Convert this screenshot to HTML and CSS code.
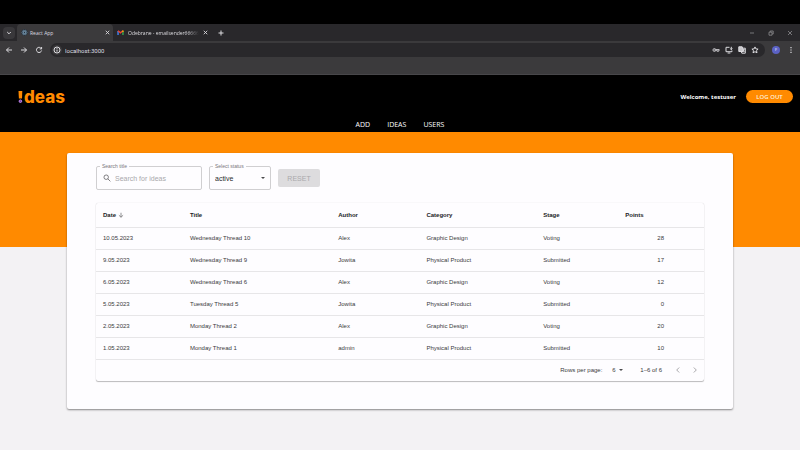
FILE: index.html
```html
<!DOCTYPE html>
<html lang="en">
<head>
<meta charset="utf-8">
<title>React App</title>
<link rel="stylesheet" href="styles.css">
</head>
<body>
<div class="browser">
  <div class="tabs">
    <button class="tab-menu" aria-label="Search tabs"><svg viewBox="0 0 8 8"><path d="M2.200 3l1.800 1.800L5.800 3"/></svg></button>
    <div class="tab tab-active">
      <svg class="react" viewBox="0 0 10 10"><circle cx="5" cy="5" r="4.500" fill="#26313c" stroke="none"/><g stroke="#7fa3bd" stroke-width=".7"><ellipse cx="5" cy="5" rx="3.800" ry="1.500"/><ellipse cx="5" cy="5" rx="3.800" ry="1.500" transform="rotate(60 5 5)"/><ellipse cx="5" cy="5" rx="3.800" ry="1.500" transform="rotate(120 5 5)"/></g></svg>
      <span class="tab-title">React App</span>
      <button aria-label="Close tab"><svg viewBox="0 0 8 8"><path d="M2 2l4 4M6 2L2 6"/></svg></button>
    </div>
    <div class="tab">
      <svg viewBox="0 0 10 8"><g stroke-width="2"><path stroke="#4285f4" d="M1.500 7.500V2"/><path stroke="#34a853" d="M8.500 7.500V3"/><path stroke="#ea4335" d="M1.500 1.500L5 4.500l3.500-3"/><path stroke="#fbbc04" d="M8.500 1.200v2"/></g></svg>
      <span class="tab-title tab-fade">Odebrane - emailsender66666</span>
      <button aria-label="Close tab"><svg viewBox="0 0 8 8"><path d="M2 2l4 4M6 2L2 6"/></svg></button>
    </div>
    <button class="new-tab" aria-label="New tab"><svg viewBox="0 0 8 8"><path d="M4 1.500v5M1.500 4h5"/></svg></button>
    <div class="window-controls">
      <button aria-label="Minimize"><svg viewBox="0 0 8 8"><path d="M2 4h4"/></svg></button>
      <button aria-label="Restore"><svg viewBox="0 0 8 8"><path d="M2 3.200h3v3H2zM3.200 3V2h3v3h-1"/></svg></button>
      <button aria-label="Close"><svg viewBox="0 0 8 8"><path d="M2 2l4 4M6 2L2 6"/></svg></button>
    </div>
  </div>
  <div class="toolbar">
    <button aria-label="Back"><svg viewBox="0 0 8 8"><path d="M7 4H1.500M4 1.500L1.500 4 4 6.500"/></svg></button>
    <button aria-label="Forward"><svg viewBox="0 0 8 8"><path d="M1 4h5.500M4 1.500L6.500 4 4 6.500"/></svg></button>
    <button aria-label="Reload"><svg viewBox="0 0 8 8"><path d="M6.300 2.600A2.600 2.600 0 1 0 6.600 4.500M6.600 1v1.900H4.700"/></svg></button>
    <div class="address">
      <span class="site-info"><svg viewBox="0 0 8 8"><circle cx="4" cy="4" r="3"/><path d="M4 3.600v2M4 2.100v.8"/></svg></span>
      <input class="url" aria-label="Address" value="localhost:3000">
      <button aria-label="Passwords"><svg viewBox="0 0 10 8"><circle cx="3" cy="4" r="1.800"/><path d="M4.800 3.400H9v1.400H8v1H6.800v-1h-2"/><circle cx="3" cy="4" r=".3"/></svg></button>
      <button aria-label="Install"><svg viewBox="0 0 8 8"><path d="M4.500 1.300H1v4.400h6V4.500M2.600 7h2.800M6.300.8v2.800M5.200 2.600l1.100 1.100 1.100-1.100"/></svg></button>
      <button aria-label="Translate"><svg viewBox="0 0 8 8"><path fill="#c8c7ca" d="M.8.8h3.400l1.200 4.700H.8z"/><path d="M4.500 2.200h2.800v5H3.800L3.300 5.800M4.800 3.800h2M5.800 3.200c0 1.500-.6 2-1.200 2.500M5 4.400l1.500 1.500"/></svg></button>
      <button aria-label="Bookmark"><svg viewBox="0 0 8 8"><path d="M4 .9l.9 2 2.200.2-1.600 1.500.5 2.200L4 5.700 2 6.800l.5-2.200L.9 3.100l2.200-.2z"/></svg></button>
    </div>
    <button class="avatar" aria-label="Profile">F</button>
    <button aria-label="Menu"><svg viewBox="0 0 8 8"><path stroke-width="1.200" d="M4 1v1.200M4 3.400v1.200M4 5.800V7"/></svg></button>
  </div>
</div>

<header class="header">
  <div class="header-top">
    <a class="logo" href="#" aria-label="Ideas"><svg viewBox="0 0 5 12"><path fill="#ff8a00" stroke="none" d="M.5 0h3.800L4 7.500H.9z"/><circle cx="2.400" cy="10.200" r="1.300" fill="#7a4aa8" stroke="#c58af0" stroke-width=".9"/></svg><span>deas</span></a>
    <div class="account"><span>Welcome, testuser</span><button class="logout">LOG OUT</button></div>
  </div>
  <nav class="nav"><a href="#">ADD</a><a href="#">IDEAS</a><a href="#">USERS</a></nav>
</header>

<main class="main">
  <section class="card">
    <form class="filters">
      <div class="field search">
        <label for="search">Search title</label>
        <svg viewBox="0 0 10 10"><circle cx="4" cy="4" r="2.800"/><path d="M6 6l3.200 3.200"/></svg>
        <input id="search" type="text" placeholder="Search for ideas">
      </div>
      <div class="field status">
        <label for="status">Select status</label>
        <select id="status"><option>active</option></select>
        <svg class="caret" viewBox="0 0 4 2"><path d="M0 0h4L2 2z"/></svg>
      </div>
      <button class="reset" type="reset" disabled>RESET</button>
    </form>
    <div class="panel">
      <table>
        <thead>
          <tr><th class="c-date">Date <svg viewBox="0 0 8 8"><path d="M4 1v6M1.200 4.300L4 7l2.800-2.700"/></svg></th><th class="c-title">Title</th><th class="c-author">Author</th><th class="c-category">Category</th><th class="c-stage">Stage</th><th>Points</th></tr>
        </thead>
        <tbody>
          <tr><td>10.05.2023</td><td>Wednesday Thread 10</td><td>Alex</td><td>Graphic Design</td><td>Voting</td><td class="points">28</td></tr>
          <tr><td>9.05.2023</td><td>Wednesday Thread 9</td><td>Jowita</td><td>Physical Product</td><td>Submitted</td><td class="points">17</td></tr>
          <tr><td>6.05.2023</td><td>Wednesday Thread 6</td><td>Alex</td><td>Graphic Design</td><td>Voting</td><td class="points">12</td></tr>
          <tr><td>5.05.2023</td><td>Tuesday Thread 5</td><td>Jowita</td><td>Physical Product</td><td>Submitted</td><td class="points">0</td></tr>
          <tr><td>2.05.2023</td><td>Monday Thread 2</td><td>Alex</td><td>Graphic Design</td><td>Voting</td><td class="points">20</td></tr>
          <tr><td>1.05.2023</td><td>Monday Thread 1</td><td>admin</td><td>Physical Product</td><td>Submitted</td><td class="points">10</td></tr>
        </tbody>
      </table>
      <div class="pagination">
        <label for="rows">Rows per page:</label>
        <div class="rows"><select id="rows"><option>6</option></select><svg class="caret" viewBox="0 0 4 2"><path d="M0 0h4L2 2z"/></svg></div>
        <span class="range">1–6 of 6</span>
        <button disabled aria-label="Previous page"><svg viewBox="0 0 8 8"><path d="M5.200 1.500L2.700 4l2.500 2.500"/></svg></button>
        <button disabled aria-label="Next page"><svg viewBox="0 0 8 8"><path d="M2.800 1.500L5.300 4 2.800 6.500"/></svg></button>
      </div>
    </div>
  </section>
</main>
</body>
</html>
```
FILE: styles.css
```css
* { box-sizing: border-box; }

body {
  margin: 0;
  min-height: 100vh;
  display: flex;
  flex-direction: column;
  background: #f3f2f4;
  font-family: "Liberation Sans", Arial, sans-serif;
  font-size: 6px;
  color: #3a3a3c;
}

button, input, select {
  margin: 0;
  padding: 0;
  border: 0;
  background: none;
  color: inherit;
  font: inherit;
  outline: 0;
}

select { appearance: none; }
a { color: inherit; text-decoration: none; }

svg {
  display: block;
  flex: none;
  width: 8px;
  height: 8px;
  fill: none;
  stroke: currentColor;
  overflow: visible;
}

/* Browser frame */
.browser {
  border-top: 24px solid #000;
  border-bottom: 1px solid #48474a;
  background: #3b3a3c;
  color: #dddce0;
  font-family: "Open Sans", sans-serif;
  font-size: 5px;
}

.tabs {
  display: flex;
  align-items: center;
  height: 17px;
  padding-left: 3px;
  background: #29282b;
}

.tab-menu {
  padding: 2px;
  border-radius: 4px;
  background: #39383b;
}

.tab {
  display: flex;
  align-items: center;
  gap: 2px;
  width: 98px;
  height: 17px;
  padding: 0 2px 0 4px;
}

.tab-active {
  width: 96px;
  margin-left: 2px;
  border-radius: 4px 4px 0 0;
  background: #3b3a3c;
}

.tab > svg { width: 7px; height: 7px; }
.tab button { margin-left: auto; }
.tab button svg { width: 7px; height: 7px; }
.tab-title { white-space: nowrap; }

.tab-fade {
  margin-left: 2px;
  mask-image: linear-gradient(90deg, #000 85%, transparent);
}

.new-tab { padding-left: 6px; }

.window-controls {
  display: flex;
  gap: 11px;
  margin-left: auto;
  padding-right: 6px;
  color: #99989b;
}

.window-controls svg { stroke-width: .7; }

.toolbar {
  display: flex;
  align-items: center;
  gap: 7px;
  padding: 2px 5px 17px;
}

.address {
  flex: 1;
  display: flex;
  align-items: center;
  gap: 5px;
  height: 14px;
  padding: 0 6px 0 2px;
  border-radius: 7px;
  background: #29282b;
}

.site-info {
  padding: 1px;
  border-radius: 50%;
  background: #3b3a3c;
}

.url {
  flex: 1;
  min-width: 0;
  margin-left: -2px;
  font-family: Roboto, sans-serif;
  font-size: 6px;
}

.avatar {
  width: 8px;
  height: 8px;
  border-radius: 50%;
  background: #5b62c4;
  color: #fff;
  font-size: 4px;
  line-height: 8px;
}

/* Site header */
.header {
  background: #000;
  color: #fff;
  font-family: "Open Sans", sans-serif;
}

.header-top {
  display: flex;
  align-items: center;
  justify-content: space-between;
  height: 43px;
  padding: 0 7px 0 18px;
}

.logo {
  display: flex;
  align-items: center;
  gap: 1px;
  color: #ff8a00;
  font-family: Inter, sans-serif;
  font-size: 17px;
  font-weight: 800;
  line-height: 20px;
}

.logo svg { width: 5px; height: 12px; }

.account {
  display: flex;
  align-items: center;
  gap: 10px;
  font-weight: 700;
}

.logout {
  width: 47px;
  height: 13px;
  border-radius: 7px;
  background: #ff8a00;
  color: #fff0dc;
  font-weight: 600;
}

.nav {
  display: flex;
  justify-content: center;
  gap: 17px;
  height: 14px;
  font-size: 7px;
  line-height: 14px;
}

/* Ideas list */
.main {
  flex: 1;
  padding: 21px 67px 41px;
  background: linear-gradient(#ff8a00 115px, transparent 115px);
}

.card {
  padding: 13px 29px 28px;
  border-radius: 2px;
  background: #fefdff;
  box-shadow: 0 1px 2px rgba(0, 0, 0, .45);
}

.filters {
  display: flex;
  align-items: center;
  gap: 7px;
  margin-bottom: 13px;
}

.field {
  position: relative;
  display: flex;
  align-items: center;
  height: 24px;
  padding: 0 6px;
  border: 1px solid #d0cfd1;
  border-radius: 2px;
  font-size: 7px;
}

.field label {
  position: absolute;
  top: -4px;
  left: 3px;
  padding: 0 2px;
  background: #fefdff;
  color: #77767a;
  font-size: 5px;
  line-height: 6px;
  white-space: nowrap;
}

.search { gap: 4px; width: 106px; }
.search svg { color: #626164; }
.search input { width: 100%; min-width: 0; }
.search input::placeholder { color: #a9a8ab; opacity: 1; }

.status { width: 62px; padding: 0 5px; color: #2c2c2e; }
.status select { flex: 1; }

.caret {
  width: 4px;
  height: 2px;
  fill: #4a4a4c;
  stroke: none;
  pointer-events: none;
}

.reset {
  width: 42px;
  height: 18px;
  border-radius: 2px;
  background: #dddcde;
  color: #aaa9ac;
  font-size: 7px;
}

.panel {
  border-radius: 2px;
  box-shadow: 0 1px 1px rgba(0, 0, 0, .25), 0 0 1px rgba(0, 0, 0, .2);
}

table {
  width: 100%;
  border-collapse: collapse;
  table-layout: fixed;
}

th, td {
  height: 22px;
  padding: 0 7px;
  border-bottom: 1px solid #e7e6e8;
  text-align: left;
}

th { height: 24px; color: #1c1c1e; }
th svg { display: inline-block; width: 6px; height: 6px; vertical-align: -1px; color: #6c6b6e; }
.c-date { width: 14.3%; }
.c-title { width: 24.4%; }
.c-author { width: 14.5%; }
.c-category { width: 19.2%; }
.c-stage { width: 13.5%; }
.points { padding-right: 40px; text-align: right; }

.pagination {
  display: flex;
  align-items: center;
  justify-content: flex-end;
  height: 21px;
  padding-right: 5px;
}

.rows {
  display: flex;
  align-items: center;
  gap: 3px;
  margin: 0 17px 0 10px;
}

.range { margin-right: 12px; }
.pagination button { color: #a9a8ab; }
.pagination button + button { margin-left: 9px; }
```
